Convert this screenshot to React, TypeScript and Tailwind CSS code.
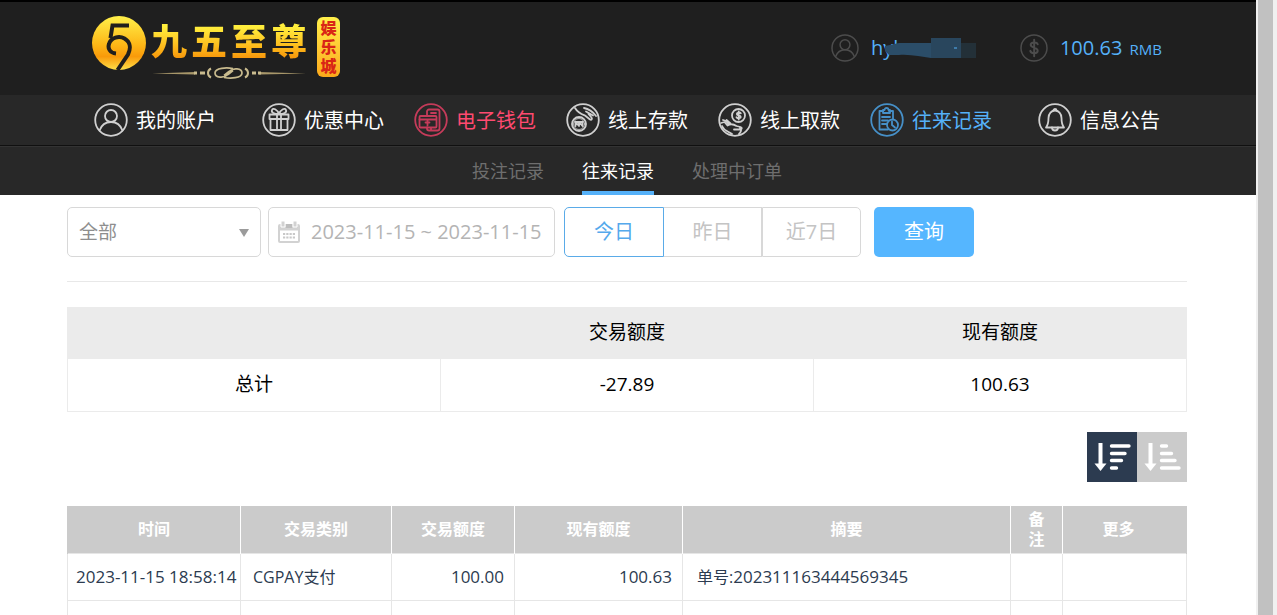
import React from 'react';
import clsx from 'clsx';

type IconName = 'user' | 'gift' | 'wallet' | 'deposit' | 'withdraw' | 'records' | 'bell' | 'dollar';

const iconShapes: Record<IconName, React.ReactNode> = {
  user: (
    <>
      <circle cx="17" cy="13" r="6" />
      <path d="M5.5 27.5c2-5.500 6.500-8.500 11.500-8.500s9.500 3 11.500 8.500" />
    </>
  ),
  gift: (
    <>
      <path d="M7.500 11.500h19v4.500h-19zM8.500 16v11h17V16M15 11.500V27M19 11.500V27" />
      <path d="M17 11c-5 0-8-1.500-7-4s5-1 7 4c2-5 6-6.500 7-4s-2 4-7 4z" />
    </>
  ),
  wallet: (
    <>
      <path d="M13 13V8.500a2 2 0 0 1 2-2h8.500a2 2 0 0 1 2 2v17a2 2 0 0 1-2 2H15a2 2 0 0 1-2-2v-1" />
      <rect x="5.500" y="13" width="17" height="11.500" rx="1" />
      <path d="M5.500 16.500H22M17 10h5M13.500 17.500v5M11.500 19.500h4M17 27v-2" />
    </>
  ),
  deposit: (
    <>
      <circle cx="13" cy="21" r="7" />
      <circle cx="13" cy="21" r="5.500" strokeWidth="0.8" />
      <path d="M9.500 23v-4l3.500 4v-4l3.500 4v-4M9 19h8" />
      <path d="M9 5c3 5 6 6 10 7.500l5 4c1.500.8 2.500-.5 1.500-2l-3-3.500M18 5c6 1 9 4 12 8M20 8.500l7 4" />
    </>
  ),
  withdraw: (
    <>
      <circle cx="20.500" cy="12.500" r="6.500" />
      <path d="M22.800 10.300c-1-1.200-4-1-4 .6 0 1.900 4 1 4 3 0 1.700-3.200 1.700-4.300.4M20.700 8.500v8" />
      <path d="M3 20l3.500-1 3 3.500c3-2 6-1.500 9 .5l4 1c2 .8 1.500 2.500-.5 2.500h-6M5 17l3 1 2.500 3M8.500 17l4 3.500M4 23c2 5 6 5 10 8M22 25c2 2 1 4-1 6" />
    </>
  ),
  records: (
    <>
      <path d="M13 8H9.500v18.500H18M19 8h4v8" />
      <path d="M13 7h1.500a2 2 0 0 1 4 0H20v3h-7zM12 14h8M12 17.500h6M12 21h4.500" />
      <circle cx="22.500" cy="22" r="5.500" />
      <path d="M22 18.500V22l3 2.500" />
    </>
  ),
  bell: (
    <>
      <path d="M8 24.500c2-2.500 2.500-5 2.500-9.500 0-4.500 3-7.500 6.500-7.500s6.500 3 6.500 7.500c0 4.500.5 7 2.500 9.500z" />
      <path d="M15.500 7.500c0-2 3-2 3 0M14 24.500c0 4 6 4 6 0" />
    </>
  ),
  dollar: <path d="M21.500 12.500c-1-3-8.500-3-8.500.7 0 4.300 8.500 2.500 8.500 7 0 4-8 4-9 .3M17.200 7v20" strokeWidth="2.400" />,
};

function RoundIcon({ name, className }: { name: IconName; className?: string }) {
  return (
    <svg
      viewBox="0 0 34 34"
      className={clsx('shrink-0', className)}
      fill="none"
      stroke="currentColor"
      strokeWidth="1.8"
      strokeLinecap="round"
      strokeLinejoin="round"
      aria-hidden="true"
    >
      <circle cx="17" cy="17" r="15.800" />
      {iconShapes[name]}
    </svg>
  );
}

const navItems: { label: string; icon: IconName; color: string; iconColor: string }[] = [
  { label: '我的账户', icon: 'user', color: 'text-white', iconColor: 'text-[#d0d0d0]' },
  { label: '优惠中心', icon: 'gift', color: 'text-white', iconColor: 'text-[#d0d0d0]' },
  { label: '电子钱包', icon: 'wallet', color: 'text-[#ff4a70]', iconColor: 'text-[#c63b5a]' },
  { label: '线上存款', icon: 'deposit', color: 'text-white', iconColor: 'text-[#d0d0d0]' },
  { label: '线上取款', icon: 'withdraw', color: 'text-white', iconColor: 'text-[#d0d0d0]' },
  { label: '往来记录', icon: 'records', color: 'text-[#55b1f9]', iconColor: 'text-[#4690c8]' },
  { label: '信息公告', icon: 'bell', color: 'text-white', iconColor: 'text-[#d0d0d0]' },
];

const subItems = ['投注记录', '往来记录', '处理中订单'];

const columns = [
  { label: '时间', width: 'w-[173px]' },
  { label: '交易类别', width: 'w-[151px]' },
  { label: '交易额度', width: 'w-[123px]' },
  { label: '现有额度', width: 'w-[168px]' },
  { label: '摘要', width: 'w-[328px]' },
  { label: '备注', width: 'w-[52px]' },
  { label: '更多', width: '' },
];

function Logo() {
  return (
    <a href="#" className="flex h-16 items-start" aria-label="九五至尊娱乐城">
      <svg viewBox="0 0 54 54" className="h-[54px] w-[54px] shrink-0" aria-hidden="true">
        <defs>
          <linearGradient id="gold" x1="0" y1="0" x2="0" y2="1">
            <stop offset="0" stopColor="#fff04a" />
            <stop offset="0.55" stopColor="#fdb515" />
            <stop offset="0.75" stopColor="#f99a0a" />
            <stop offset="1" stopColor="#ffe04a" />
          </linearGradient>
        </defs>
        <circle cx="27" cy="27" r="27" fill="url(#gold)" />
        <g fill="none" stroke="#211f1d" strokeWidth="4">
          <path d="M37 9.500H20.500L18.500 22" />
          <path d="M24 37.500c-6-.5-8.500-5-7-9.500 2-6.500 10-8.500 15.500-5.500 6 3.500 6.500 10 3.500 16L25.500 54" />
        </g>
      </svg>
      <div className="ml-[5px] flex flex-col">
        <div className="flex h-[50px] items-center gap-1 pt-0.5 text-[36px] leading-[50px] font-black">
          {['九', '五', '至', '尊'].map((char) => (
            <span
              key={char}
              className="bg-linear-to-b from-[#ffee3c] from-20% via-[#fdb91a] via-60% to-[#f59209] to-85% bg-clip-text text-transparent"
            >
              {char}
            </span>
          ))}
        </div>
        <svg viewBox="0 0 156 14" className="h-3.5 w-[156px]" fill="none" stroke="#c9bb8e" aria-hidden="true">
          <path d="M1 7.500L44 6v2.500zM155 7.500L108 6v2.500z" fill="#a8976a" stroke="none" />
          <path d="M43 7h3M49 7h5M101 7h4M107 7h3" strokeWidth="3" />
          <path d="M60 2.500c-4 2-4 7 0 9M94 2.500c4 2 4 7 0 9" strokeWidth="2" />
          <path
            d="M82 2.500c-6-1-18-1-18 4.500 0 5 9 5.500 13 1.500l5-4M73 11.500c6 1 18 1 18-4.500 0-5-9-5.500-13-1.500l-5 4"
            strokeWidth="1.700"
          />
        </svg>
      </div>
      <span className="mt-px ml-2.5 flex h-[60px] w-[23px] flex-col items-center justify-center rounded-md bg-linear-to-b from-[#fff04a] to-[#fba81a] text-[16px] leading-[19px] font-black text-[#d92616]">
        <span>娱</span>
        <span>乐</span>
        <span>城</span>
      </span>
    </a>
  );
}

function Header() {
  return (
    <header className="border-t-2 border-black bg-[#1f1f1f] pr-0.5">
      <div className="mx-auto flex h-[93px] max-w-[1120px] items-start justify-between px-[25px] pt-3.5">
        <Logo />
        <div className="flex h-16 items-center text-[20px] leading-7 text-[#55b1f9]">
          <RoundIcon name="user" className="size-7 text-[#4c4c4c]" />
          <span className="relative ml-3 w-[149px]">
            hyl
            {/* brushed-over part of the account name */}
            <svg viewBox="0 0 92 24" className="absolute top-1 left-3.5 h-6 w-[92px]" aria-hidden="true">
              <path d="M0 8L14 5H46V0H76V20H46C36 19 26 16 14 17L4 17L0 13z" fill="#2b4d68" />
              <path d="M46 0h30v20H46z" fill="#29465d" />
              <path d="M76 5h15v15H76z" fill="#233038" />
              <path d="M69 10h3" stroke="#55b1f9" />
            </svg>
          </span>
          <RoundIcon name="dollar" className="size-7 text-[#4c4c4c]" />
          <span className="ml-3">
            100.63 <small className="ml-0.5 text-[15px]">RMB</small>
          </span>
        </div>
      </div>
    </header>
  );
}

function MainNav() {
  return (
    <nav className="border-b border-[#101010] bg-[#282828] pr-0.5">
      <ul className="mx-auto flex h-[50px] max-w-[1120px] items-center justify-center gap-[30px]">
        {navItems.map((item) => (
          <li key={item.label} className="first:mr-4 last:ml-4">
            <a href="#" className={clsx('flex items-center gap-2 text-[20px] leading-7 whitespace-nowrap', item.color)}>
              <RoundIcon name={item.icon} className={clsx('size-[34px]', item.iconColor)} />
              <span className="pt-0.5">{item.label}</span>
            </a>
          </li>
        ))}
      </ul>
    </nav>
  );
}

function SubNav() {
  return (
    <nav className="border-t border-[#333333] bg-[#282828] pr-0.5">
      <ul className="flex h-12 justify-center gap-[38px] text-[18px] leading-12">
        {subItems.map((label) => (
          <li key={label}>
            <a
              href="#"
              className={clsx(
                'block h-full border-b-4',
                label === '往来记录' ? 'border-[#55b1f9] text-white' : 'border-transparent text-[#6e6e6e]',
              )}
            >
              {label}
            </a>
          </li>
        ))}
      </ul>
    </nav>
  );
}

function Filters() {
  return (
    <form className="flex h-[75px] border-b border-[#e8e8e8] text-[20px]">
      <div className="relative h-[50px] w-[194px]">
        <select
          aria-label="类别"
          className="h-full w-full appearance-none rounded-[5px] border border-[#d8d8d8] bg-white pl-[11px] text-[19px] text-[#8e8e8e]"
        >
          <option>全部</option>
        </select>
        <svg viewBox="0 0 10 8" className="pointer-events-none absolute top-[22px] right-3 h-2 w-2.5" aria-hidden="true">
          <path d="M0 0h10L5 8z" fill="#9b9b9b" />
        </svg>
      </div>
      <label className="ml-[7px] flex h-[50px] w-[287px] items-center rounded-[5px] border border-[#d8d8d8] pl-[9px]">
        <svg viewBox="0 0 22 22" className="h-[22px] w-[22px] shrink-0" aria-hidden="true">
          <path d="M0 9V5a2 2 0 0 1 2-2h18a2 2 0 0 1 2 2v15a2 2 0 0 1-2 2H2a2 2 0 0 1-2-2z" fill="#d2d2d2" />
          <path d="M8 3h6v4H8z" fill="#bdbdbd" />
          <path d="M3 0h4v6H3zM15 0h4v6h-4z" fill="#d2d2d2" stroke="#fff" />
          <path d="M2 9.500h18V20H2z" fill="#fff" />
          <path d="M5 13h12M5 16.500h12" stroke="#c8c8c8" strokeWidth="2.200" strokeDasharray="2.200 1.067" />
        </svg>
        <input
          type="text"
          readOnly
          aria-label="日期"
          defaultValue="2023-11-15 ~ 2023-11-15"
          className="ml-[11px] w-full min-w-0 text-[20px] text-[#b4b4b4] outline-none"
        />
      </label>
      <div className="ml-[9px] flex h-[50px] text-[#c4c4c4]">
        <button type="button" className="w-[100px] rounded-l-[5px] border border-[#5aabe8] text-[#55a9ec]">
          今日
        </button>
        <button type="button" className="w-[98px] border-y border-r border-[#d8d8d8]">
          昨日
        </button>
        <button type="button" className="w-[99px] rounded-r-[5px] border border-[#d8d8d8]">
          近7日
        </button>
      </div>
      <button type="button" className="ml-[13px] h-[50px] w-[100px] rounded-[5px] bg-[#55b6ff] text-white">
        查询
      </button>
    </form>
  );
}

function SummaryTable() {
  return (
    <table className="mt-[25px] w-full table-fixed border-collapse text-center text-[19px] text-black">
      <thead>
        <tr className="h-[51px] bg-[#ebebeb]">
          <th className="border-l border-[#ebebeb]" />
          <th className="font-normal">交易额度</th>
          <th className="font-normal">现有额度</th>
        </tr>
      </thead>
      <tbody>
        <tr className="h-[53px]">
          <td className="border border-[#ebebeb]">总计</td>
          <td className="border border-[#ebebeb]">-27.89</td>
          <td className="border border-[#ebebeb]">100.63</td>
        </tr>
      </tbody>
    </table>
  );
}

function SortButtons() {
  return (
    <div className="mt-5 flex justify-end text-white">
      <button type="button" aria-label="降序" className="size-[50px] bg-[#2c3b50]">
        <svg viewBox="0 0 50 50" fill="none" stroke="currentColor" strokeWidth="3.400" strokeLinecap="round">
          <path d="M13.500 11v21" strokeWidth="4" strokeLinecap="butt" />
          <path d="M7.500 31.500h12l-6 7.500z" fill="currentColor" stroke="none" />
          <path d="M24.500 14h17.500M24.500 21.500h13.500M24.500 28.500h10M24.500 36h5" />
        </svg>
      </button>
      <button type="button" aria-label="升序" className="size-[50px] bg-[#cbcbcb]">
        <svg viewBox="0 0 50 50" fill="none" stroke="currentColor" strokeWidth="3.400" strokeLinecap="round">
          <path d="M13.500 11v21" strokeWidth="4" strokeLinecap="butt" />
          <path d="M7.500 31.500h12l-6 7.500z" fill="currentColor" stroke="none" />
          <path d="M24.500 14h5M24.500 21.500h10M24.500 28.500h13.500M24.500 36h17.500" />
        </svg>
      </button>
    </div>
  );
}

function RecordsTable() {
  const cell = 'border border-[#e6e6e6]';

  return (
    <table className="mt-6 w-full table-fixed border-collapse text-[17px] text-[#2c3b50]">
      <thead>
        <tr className="h-12 bg-[#cbcbcb] text-[16px] leading-5 text-white">
          {columns.map((col) => (
            <th
              key={col.label}
              className={clsx(
                'border-r border-l-[#cbcbcb] border-r-white px-4 font-bold first:border-l last:border-r-[#cbcbcb] last:pr-7',
                col.width,
              )}
            >
              {col.label}
            </th>
          ))}
        </tr>
      </thead>
      <tbody>
        <tr className="h-[47px]">
          <td className={clsx(cell, 'pl-2 whitespace-nowrap')}>2023-11-15 18:58:14</td>
          <td className={clsx(cell, 'pl-3 text-[16px]')}>CGPAY支付</td>
          <td className={clsx(cell, 'pr-2.5 text-right')}>100.00</td>
          <td className={clsx(cell, 'pr-2.5 text-right')}>100.63</td>
          <td className={clsx(cell, 'pl-3.5 text-[16px]')}>
            单号:<span className="text-[17px]">202311163444569345</span>
          </td>
          <td className={cell} />
          <td className={cell} />
        </tr>
        <tr className="h-[47px]">
          {columns.map((col) => (
            <td key={col.label} className={cell} />
          ))}
        </tr>
      </tbody>
    </table>
  );
}

export default function App() {
  return (
    <div className="flex h-screen overflow-hidden bg-white font-['Open_Sans','Noto_Sans_CJK_SC',sans-serif]">
      <div className="min-w-0 flex-1">
        <Header />
        <MainNav />
        <SubNav />
        <main className="pr-0.5">
          <div className="mx-auto max-w-[1120px] pt-3">
            <Filters />
            <SummaryTable />
            <SortButtons />
            <RecordsTable />
          </div>
        </main>
      </div>
      <div className="w-[21px] shrink-0 bg-[#f0f0f0] pr-1 pl-0.5">
        <div className="h-full bg-[#c1c1c1]" />
      </div>
    </div>
  );
}
